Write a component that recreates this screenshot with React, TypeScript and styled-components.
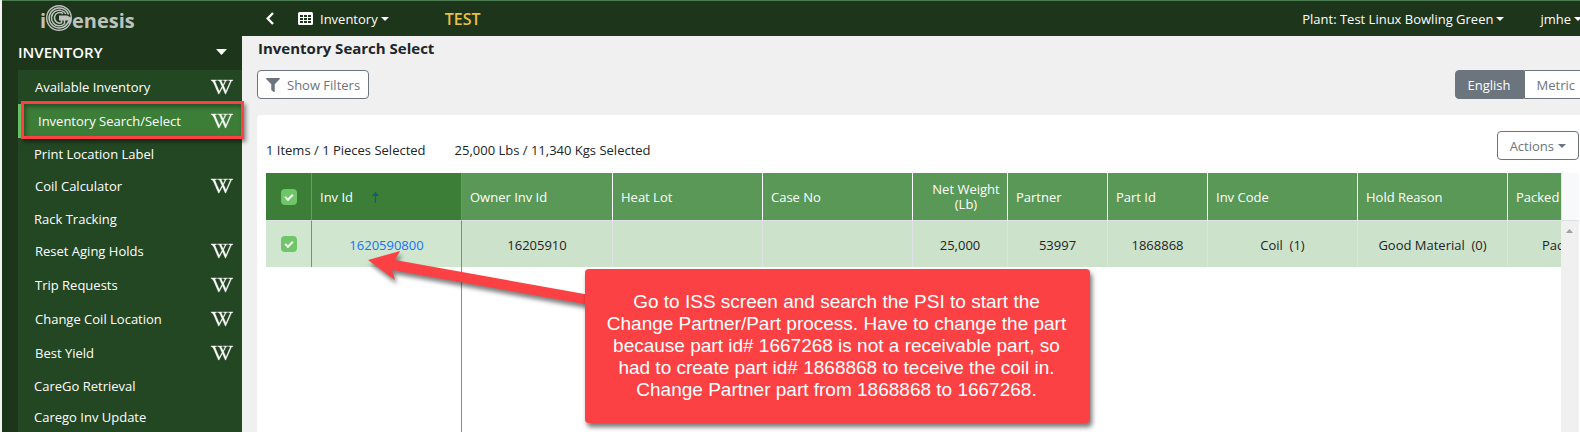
import React from 'react';
import styled, { createGlobalStyle, css } from 'styled-components';
import { FaWikipediaW, FaFilter } from 'react-icons/fa';

const GlobalStyle = createGlobalStyle`
  *, *::before, *::after { box-sizing: border-box; }
  html, body, #root { height: 100%; }
  body {
    margin: 0;
    overflow: hidden;
    background: #f0f0f0;
    color: #212529;
    font-family: 'Open Sans', 'Noto Sans', sans-serif;
    font-size: 13px;
    line-height: 20px;
  }
  button { font: inherit; cursor: pointer; }
  a { text-decoration: none; }
`;

const Shell = styled.div`
  position: relative;
  display: flex;
  width: calc(100% + 8px);
  min-height: 100vh;
  border-left: 2px solid #f4f4f4;
`;

const Sidebar = styled.nav`
  flex: 0 0 240px;
  border-top: 1px solid #4b7c52;
  background: #1d351b;
  color: #fff;
`;

const Brand = styled.a`
  display: flex;
  height: 35px;
  padding-left: 36px;
`;

const SectionButton = styled.button`
  display: flex;
  align-items: center;
  justify-content: space-between;
  width: 100%;
  height: 34px;
  padding: 0 15px 2px 16px;
  border: 0;
  background: none;
  color: #fff;
  font-size: 15px;
  font-weight: 600;
`;

const Menu = styled.ul`
  margin: 0 0 0 16px;
  padding: 0;
  list-style: none;
  background: #244723;
`;

const MenuItem = styled.li<{ $wiki?: boolean; $active?: boolean }>`
  position: relative;
  display: flex;
  align-items: center;
  justify-content: space-between;
  height: ${(p) => (p.$wiki ? 34 : 31)}px;
  padding: 0 9px 0 ${(p) => (p.$wiki ? 17 : 16)}px;
  ${(p) =>
    p.$active &&
    css`
      padding-left: 16px;
      border-left: 4px solid #6ac466;
      background: #3c7d38;
    `}
`;

const MenuLink = styled.a`
  color: #fff;
`;

const WikiLink = styled.a`
  display: flex;
  color: #fff;
  svg {
    stroke: currentColor;
    stroke-width: 10px;
    overflow: visible;
  }
`;

const Highlight = styled.span`
  position: absolute;
  inset: -3px -2px -1px -1px;
  border: 3px solid #fc4044;
  box-shadow: 2px 3px 4px rgba(0, 0, 0, 0.45), inset 2px 3px 4px rgba(0, 0, 0, 0.35);
  pointer-events: none;
`;

const Main = styled.main`
  flex: 1;
  min-width: 0;
  display: flex;
  flex-direction: column;
`;

const TopBar = styled.header`
  display: flex;
  align-items: center;
  height: 36px;
  padding: 0 6px 0 24px;
  border-top: 1px solid #4b7c52;
  background: #1d351b;
  color: #fff;
`;

const BarButton = styled.button<{ $gap: number }>`
  display: flex;
  align-items: center;
  gap: 3px;
  margin-left: ${(p) => p.$gap}px;
  padding: 0;
  border: 0;
  background: none;
  color: #fff;
  white-space: nowrap;
`;

const BarLabel = styled.span`
  margin-left: 4px;
`;

const Environment = styled.strong`
  margin: 0 auto 0 56px;
  color: #eabf46;
  font-size: 16px;
  font-weight: 600;
`;

const Content = styled.div`
  display: flex;
  flex: 1;
  flex-direction: column;
  padding-left: 15px;
`;

const Title = styled.h1`
  margin: 1px 0 11px 1px;
  font-size: 15px;
  font-weight: 700;
  line-height: 22px;
`;

const Toolbar = styled.div`
  display: flex;
  justify-content: space-between;
  margin-bottom: 16px;
`;

const OutlineButton = styled.button`
  display: flex;
  align-items: center;
  gap: 7px;
  height: 29px;
  padding: 0 8px;
  border: 1px solid #6c757d;
  border-radius: 4px;
  background: #fff;
  color: #6c757d;
`;

const ActionsButton = styled(OutlineButton)`
  gap: 4px;
  padding: 0 12px;
`;

const UnitGroup = styled.div`
  display: flex;
`;

const UnitButton = styled(OutlineButton)<{ $on?: boolean }>`
  padding: 0 12px;
  border-radius: ${(p) => (p.$on ? '4px 0 0 4px' : '0 4px 4px 0')};
  ${(p) =>
    p.$on &&
    css`
      background: #6c757d;
      color: #fff;
    `}
`;

const Panel = styled.section`
  flex: 1;
  display: flex;
  flex-direction: column;
  padding: 16px 9px 0;
  border-radius: 4px 4px 0 0;
  background: #fff;
`;

const Summary = styled.div`
  display: flex;
  align-items: flex-start;
  gap: 29px;
  margin-bottom: 13px;
`;

const Count = styled.span`
  padding-top: 9px;
`;

const SummaryActions = styled.div`
  margin-left: auto;
`;

const Grid = styled.div`
  display: flex;
  flex: 1;
`;

const TableView = styled.div`
  flex: 1;
  min-width: 0;
  overflow: hidden;
  background: linear-gradient(#8a8a8a, #8a8a8a) 195px 0 / 1px 100% no-repeat;
`;

const Table = styled.table`
  width: 1391px;
  border-collapse: separate;
  border-spacing: 0;
  table-layout: fixed;
`;

const Th = styled.th<{ $pinned?: boolean; $center?: boolean }>`
  height: 48px;
  padding: ${(p) => (p.$center ? '0 0 0 12px' : '2px 8px 0')};
  border-right: 1px solid ${(p) => (p.$pinned ? '#7d8f7c' : '#fff')};
  border-bottom: 1px solid #dee2e6;
  background: ${(p) => (p.$pinned ? '#3c7d38' : '#599856')};
  color: #fff;
  font-weight: 400;
  line-height: 15px;
  text-align: ${(p) => (p.$center ? 'center' : 'left')};
`;

const Td = styled.td<{ $pinned?: boolean }>`
  height: 46px;
  padding: 2px 0 0;
  border-right: 1px solid ${(p) => (p.$pinned ? '#7d8f7c' : '#dee2e6')};
  background: ${(p) => (p.$pinned ? '#d0e6cf' : '#cde2cb')};
  text-align: center;
  white-space: pre;
`;

const CheckTh = styled(Th)`
  padding: 0;
`;

const CheckTd = styled(Td)`
  padding: 0;
`;

const IdLink = styled.a`
  color: #1473fb;
`;

const Check = styled.input`
  appearance: none;
  display: block;
  position: relative;
  width: 16px;
  height: 16px;
  margin: 0 auto;
  border-radius: 4px;
  background: #6ec669;
  &:checked::after {
    content: '';
    position: absolute;
    left: 4px;
    top: 5px;
    width: 8px;
    height: 5px;
    border: solid #fff;
    border-width: 0 0 2px 2px;
    transform: rotate(-45deg);
  }
`;

const SortLabel = styled.span`
  display: flex;
  align-items: center;
  gap: 19px;
`;

const ScrollRail = styled.div`
  flex: 0 0 18px;
  display: flex;
  flex-direction: column;
`;

const RailHead = styled.div`
  height: 48px;
  border-left: 1px solid #dee2e6;
  border-bottom: 1px solid #dee2e6;
  background: #f8f9fa;
`;

const RailTrack = styled.div`
  flex: 1;
  padding: 7px 5px;
  background: #f0f0f0;
  line-height: 0;
`;

const Arrow = styled.svg`
  position: absolute;
  left: 362px;
  top: 244px;
  filter: drop-shadow(2px 4px 2px rgba(0, 0, 0, 0.5));
  pointer-events: none;
`;

const Callout = styled.p`
  position: absolute;
  left: 583px;
  top: 269px;
  width: 505px;
  margin: 0;
  padding: 22px 22px 22px 20px;
  border-radius: 4px;
  background: #fc4144;
  box-shadow: 2px 4px 5px rgba(0, 0, 0, 0.55);
  color: #fff;
  font-family: 'Liberation Sans', Arial, sans-serif;
  font-size: 19px;
  line-height: 22px;
  text-align: center;
`;

type CaretProps = { w?: number; h?: number; up?: boolean; color?: string };

const Caret = ({ w = 8, h = 4, up = false, color = 'currentColor' }: CaretProps) => (
  <svg width={w} height={h} viewBox="0 0 8 4" preserveAspectRatio="none" aria-hidden="true">
    <path d={up ? 'M0 4 4 0 8 4Z' : 'M0 0H8L4 4Z'} fill={color} />
  </svg>
);

const Logo = () => (
  <svg width="100" height="34" viewBox="38 1 100 34" aria-label="iGenesis" fill="none">
    <g stroke="#bfc3be">
      <circle cx="59" cy="18" r="12.300" strokeWidth="1.400" />
      <path d="M68.500 14.500A10 10 0 1 0 68.800 20.500" strokeWidth="1.600" />
      <path d="M65.800 13.800A7.800 7.800 0 1 0 64.500 23.800V20" strokeWidth="1.500" />
      <path d="M63 13.600A5.300 5.300 0 1 0 61.500 22.800V20" strokeWidth="1.500" />
    </g>
    <path d="M59 15.500H67L71 17.500V21L68.500 24.500V20.500H59Z" fill="#bfc3be" />
    <g fill="#bfc3be" fontFamily="'Open Sans', sans-serif" fontWeight="700" fontSize="20">
      <text x="40" y="28">i</text>
      <text x="72" y="28">enesis</text>
    </g>
  </svg>
);

const menu = [
  { label: 'Available Inventory', wiki: true },
  { label: 'Inventory Search/Select', wiki: true, active: true },
  { label: 'Print Location Label' },
  { label: 'Coil Calculator', wiki: true },
  { label: 'Rack Tracking' },
  { label: 'Reset Aging Holds', wiki: true },
  { label: 'Trip Requests', wiki: true },
  { label: 'Change Coil Location', wiki: true },
  { label: 'Best Yield', wiki: true },
  { label: 'CareGo Retrieval' },
  { label: 'Carego Inv Update' },
];

const columns = [
  { title: 'Owner Inv Id', value: '16205910', width: 151 },
  { title: 'Heat Lot', value: '', width: 150 },
  { title: 'Case No', value: '', width: 150 },
  { title: 'Net Weight (Lb)', value: '25,000', width: 95, center: true },
  { title: 'Partner', value: '53997', width: 100 },
  { title: 'Part Id', value: '1868868', width: 100 },
  { title: 'Inv Code', value: 'Coil  (1)', width: 150 },
  { title: 'Hold Reason', value: 'Good Material  (0)', width: 150 },
  { title: 'Packed', value: 'Packaged  (P)', width: 149 },
];

export default function App() {
  return (
    <>
      <GlobalStyle />
      <Shell>
        <Sidebar>
          <Brand href="#"><Logo /></Brand>
          <SectionButton>INVENTORY <Caret w={11} h={6} /></SectionButton>
          <Menu>
            {menu.map((m) => (
              <MenuItem key={m.label} $wiki={m.wiki} $active={m.active}>
                <MenuLink href="#">{m.label}</MenuLink>
                {m.wiki && (
                  <WikiLink href="#" aria-label={`${m.label} wiki`}>
                    <FaWikipediaW size={22} />
                  </WikiLink>
                )}
                {m.active && <Highlight />}
              </MenuItem>
            ))}
          </Menu>
        </Sidebar>
        <Main>
          <TopBar>
            <BarButton $gap={0} aria-label="Back">
              <svg width="8" height="13" viewBox="0 0 8 13" fill="none" stroke="#fff" strokeWidth="2.400">
                <path d="M7 1 1.700 6.500 7 12" />
              </svg>
            </BarButton>
            <BarButton $gap={24}>
              <svg width="15" height="13" viewBox="0 0 15 13" aria-hidden="true">
                <rect width="15" height="13" rx="1.500" fill="#fff" />
                <path d="M2 3h3v2H2zM6 3h3v2H6zM10 3h3v2h-3zM2 6h3v2H2zM6 6h3v2H6zM10 6h3v2h-3zM2 9h3v2H2zM6 9h3v2H6zM10 9h3v2h-3z" fill="#1d351b" />
              </svg>
              <BarLabel>Inventory</BarLabel> <Caret />
            </BarButton>
            <Environment>TEST</Environment>
            <BarButton $gap={0}>Plant: Test Linux Bowling Green <Caret /></BarButton>
            <BarButton $gap={36}>jmhe <Caret /></BarButton>
          </TopBar>
          <Content>
            <Title>Inventory Search Select</Title>
            <Toolbar>
              <OutlineButton><FaFilter size={14} /> Show Filters</OutlineButton>
              <UnitGroup>
                <UnitButton $on>English</UnitButton>
                <UnitButton>Metric</UnitButton>
              </UnitGroup>
            </Toolbar>
            <Panel>
              <Summary>
                <Count>1 Items / 1 Pieces Selected</Count>
                <Count>25,000 Lbs / 11,340 Kgs Selected</Count>
                <SummaryActions>
                  <ActionsButton>Actions <Caret /></ActionsButton>
                </SummaryActions>
              </Summary>
              <Grid>
                <TableView>
                  <Table>
                    <colgroup>
                      <col style={{ width: 46 }} />
                      <col style={{ width: 150 }} />
                      {columns.map((c) => <col key={c.title} style={{ width: c.width }} />)}
                    </colgroup>
                    <thead>
                      <tr>
                        <CheckTh $pinned><Check type="checkbox" defaultChecked aria-label="Select all" /></CheckTh>
                        <Th $pinned>
                          <SortLabel>
                            Inv Id
                            <svg width="7" height="11" viewBox="0 0 7 11" aria-hidden="true">
                              <path d="M3.500 0 7 4H4.100V11H2.900V4H0Z" fill="#0d5a86" />
                            </svg>
                          </SortLabel>
                        </Th>
                        {columns.map((c) => <Th key={c.title} $center={c.center}>{c.title}</Th>)}
                      </tr>
                    </thead>
                    <tbody>
                      <tr>
                        <CheckTd $pinned><Check type="checkbox" defaultChecked aria-label="Select 1620590800" /></CheckTd>
                        <Td $pinned><IdLink href="#">1620590800</IdLink></Td>
                        {columns.map((c) => <Td key={c.title}>{c.value}</Td>)}
                      </tr>
                    </tbody>
                  </Table>
                </TableView>
                <ScrollRail>
                  <RailHead />
                  <RailTrack><Caret up w={7} color="#a0a0a0" /></RailTrack>
                </ScrollRail>
              </Grid>
            </Panel>
          </Content>
        </Main>
        <Arrow width="230" height="70" viewBox="364 244 230 70" aria-hidden="true">
          <path d="M368 260 400 251 395 260 590 295V305L392 270 395 280Z" fill="#fc4144" />
        </Arrow>
        <Callout>
          Go to ISS screen and search the PSI to start the Change Partner/Part process. Have to change the part because part id# 1667268 is not a receivable part, so had to create part id# 1868868 to teceive the coil in. Change Partner part from 1868868 to 1667268.
        </Callout>
      </Shell>
    </>
  );
}
